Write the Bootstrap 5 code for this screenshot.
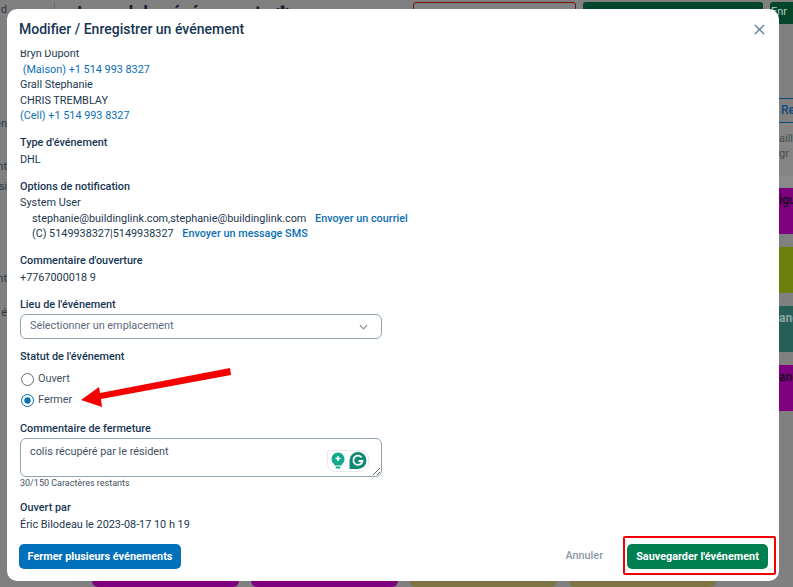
<!DOCTYPE html>
<html lang="fr">
<head>
    <meta charset="UTF-8">
    <meta name="viewport" content="width=device-width, initial-scale=1.0">
    <title>Modifier / Enregistrer un événement</title>
    <link href="https://cdn.jsdelivr.net/npm/bootstrap@5.3.0/dist/css/bootstrap.min.css" rel="stylesheet">
    <style>
        html, body { height: 100%; overflow: hidden; }
        body { background: #808080; font-family: Roboto, "Liberation Sans", sans-serif; font-size: 10.85px; color: #22384f; }

        /* page derriere la modale */
        .fond { height: 587px; width: 793px; overflow: hidden; position: relative; background: #808080; }
        .fond-haut { height: 30px; overflow: hidden; padding-top: 2px; }
        .fond-titre { flex: none; font-size: 18px; font-weight: 700; color: #0d1f33; line-height: 22px; margin-left: 72px; width: 322px; white-space: nowrap; }
        .fond-btn { height: 22px; border-radius: 3px; flex: none; }
        .fond-rouge { width: 163px; margin-left: 19px; border: 1px solid #7a1212; }
        .fond-vert { width: 180px; margin-left: 7px; background: #04452b; }
        .fond-vert2 { width: 30px; margin-left: 7px; background: #04452b; color: #b9cfc4; font-size: 11px; line-height: 20px; padding-left: 1px; }
        .fond-filet { position: absolute; left: 54px; top: 2px; width: 1px; height: 8px; background: #6a6a6a; }
        .fond-droite { position: absolute; left: 779px; top: 0; width: 14px; height: 587px; font-size: 12px; white-space: nowrap; overflow: hidden; }
        .fond-onglet { margin-top: 98px; height: 25px; border-top: 1px solid #0c4a78; border-bottom: 1px solid #0c4a78; color: #0c4a78; line-height: 23px; font-weight: 500; padding-left: 2px; }
        .fond-texte { height: 53px; background: #858585; color: #4b4b4b; line-height: 15px; padding-top: 8px; font-size: 11px; }
        .fond-carte { height: 46px; line-height: 24px; font-weight: 700; font-size: 12px; margin-bottom: 13px; color: #1d0a2a; }
        .fond-violet { background: #7f007f; }
        .fond-olive { background: #6c7f0b; }
        .fond-sarcelle { background: #265f55; color: #8fa6a1; }
        .fond-gauche { position: absolute; left: 0; top: 0; width: 7px; height: 587px; overflow: hidden; color: #2b3a49; font-size: 11px; line-height: 14px; }
        .fond-gauche div { display: flex; justify-content: flex-end; white-space: nowrap; }
        .fond-bas { position: absolute; left: 0; top: 581px; width: 793px; height: 6px; display: flex; overflow: hidden; }
        .fond-pastille { width: 147px; height: 6px; border-radius: 0 0 6px 6px; flex: none; }

        /* modale */
        .modale { position: absolute; left: 7px; top: 9px; width: 772px; height: 572px; border: 0; border-radius: 10px; overflow: hidden; background: #fff; }
        .modale .modal-header { height: 41px; padding: 0 14px 0 12px; border: 0; flex: none; }
        .modale .modal-title { font-size: 14px; font-weight: 500; color: #163553; margin: 0; }
        .btn-fermer { width: 11px; height: 11px; padding: 0; border: 0; background: none; display: block; line-height: 0; }
        .modale .modal-body { padding: 0 13px; overflow: hidden; height: 494px; flex: none; line-height: 15.5px; }
        .corps { margin-top: -4px; }
        .titre-champ { font-weight: 500; color: #163553; line-height: 16.5px; }
        .lien { color: #0b6fb5; text-decoration: none; }
        .lien-fort { color: #0b6fb5; text-decoration: none; font-weight: 500; margin-left: 6px; }
        .bloc { margin-bottom: 11.5px; }
        .bloc-lieu { margin-bottom: 9.5px; }
        .retrait { padding-left: 12px; }
        .champ { width: 362px; }
        .champ-select { margin-top: 1px; height: 25px; font-size: 10.85px; color: #5b6b7d; background-color: #fff; border: 1px solid #93a3b6; border-radius: 6px; padding: 0 9px; background-image: url("data:image/svg+xml,%3csvg xmlns='http://www.w3.org/2000/svg' viewBox='0 0 10 6'%3e%3cpath fill='none' stroke='%236f8093' stroke-width='1.200' d='M1 1l4 4 4-4'/%3e%3c/svg%3e"); background-size: 9px 6px; background-position: right 13px center; }
        .champ-texte { height: 39px; min-height: 39px; font-size: 10.85px; color: #3f5163; border: 1px solid #93a3b6; border-radius: 6px; padding: 5px 9px; line-height: 15px; }
        .zone-texte { position: relative; }
        .grammarly { position: absolute; left: 307px; top: 12px; width: 42px; height: 22px; background: #fff; border: 1px solid #e6eaee; border-radius: 0 9px 9px 9px; line-height: 0; }
        .radio-ligne { display: flex; align-items: center; gap: 4px; margin-bottom: 7px; min-height: 14px; padding: 0; color: #3f5163; line-height: 14px; }
        .radio-ligne .form-check-input { float: none; margin: 0 0 0 1px; width: 13px; height: 13px; border: 1px solid #5e6f80; flex: none; }
        .radio-ligne .form-check-input:checked { background-color: #fff; border-color: #0b6fb5; background-image: url("data:image/svg+xml,%3csvg xmlns='http://www.w3.org/2000/svg' viewBox='-4 -4 8 8'%3e%3ccircle r='2.300' fill='%230b6fb5'/%3e%3c/svg%3e"); }
        .compteur { font-size: 9px; color: #3f5163; line-height: 12px; }
        .espace-statut { margin-bottom: 7px; }
        .bloc-statut { margin-bottom: 14px; }
        .modale .modal-footer { flex: none; border: 0; padding: 0 11px 0 12px; height: 37px; align-items: flex-start; justify-content: space-between; margin: 0; }
        .modale .modal-footer > * { margin: 0; }
        .btn-bleu, .btn-vert { font-size: 10.85px; font-weight: 700; height: 25px; padding: 0; border: 0; border-radius: 5px; color: #fff; line-height: 25px; white-space: nowrap; }
        .btn-bleu { background: #0070bb; width: 162px; }
        .btn-vert { background: #008052; width: 141px; margin-left: 24px; }
        .btn-bleu:hover { background: #0070bb; color: #fff; }
        .btn-vert:hover { background: #008052; color: #fff; }
        .btn-annuler { font-size: 10.85px; font-weight: 500; color: #8d99a6; padding: 0; border: 0; background: none; }
        .annotation { position: absolute; left: 0; top: 0; pointer-events: none; }
        .cadre-rouge { position: absolute; left: 623px; top: 536px; width: 153px; height: 39px; border: 2px solid #f40000; border-radius: 2px; }
    </style>
</head>
<body>

<div class="fond">
    <div class="fond-haut d-flex align-items-start">
        <div class="fond-titre">Journal des événements ✱</div>
        <div class="fond-btn fond-rouge"></div>
        <div class="fond-btn fond-vert"></div>
        <div class="fond-btn fond-vert2">Enr</div>
    </div>
    <div class="fond-filet"></div>

    <div class="fond-gauche">
        <div style="margin-top:3px">d</div>
        <div style="margin-top:100px">en</div>
        <div style="margin-top:29px">nt</div>
        <div style="margin-top:6px">si</div>
        <div style="margin-top:78px">nt</div>
        <div style="margin-top:20px">é</div>
    </div>

    <div class="fond-droite">
        <div class="fond-onglet">Re</div>
        <div class="fond-texte">aille<br>gr</div>
        <div style="height:12px;background:#8a8a8a"></div>
        <div class="fond-carte fond-violet">igu</div>
        <div class="fond-carte fond-olive"></div>
        <div class="fond-carte fond-sarcelle">anc</div>
        <div class="fond-carte fond-violet">anc</div>
    </div>

    <div class="fond-bas">
        <div class="fond-pastille fond-violet" style="margin-left:92px"></div>
        <div class="fond-pastille fond-violet" style="margin-left:12px"></div>
        <div class="fond-pastille" style="margin-left:12px;background:#7f7443"></div>
        <div class="fond-pastille" style="margin-left:12px;background:#7f7443"></div>
    </div>
</div>

<div class="modal-content modale">
    <div class="modal-header">
        <h5 class="modal-title">Modifier / Enregistrer un événement</h5>
        <button type="button" class="btn-fermer ms-auto" aria-label="Fermer">
            <svg width="11" height="11" viewBox="0 0 11 11"><path d="M1 1l9 9M10 1l-9 9" stroke="#5f7c99" stroke-width="1.4" fill="none"/></svg>
        </button>
    </div>
    <div class="modal-body">
        <div class="corps">
            <div class="bloc">
                <div>Bryn Dupont</div>
                <div><a class="lien" href="#">&nbsp;(Maison) +1 514 993 8327</a></div>
                <div>Grall Stephanie</div>
                <div>CHRIS TREMBLAY</div>
                <div><a class="lien" href="#">(Cell) +1 514 993 8327</a></div>
            </div>
            <div class="bloc">
                <div class="titre-champ">Type d'événement</div>
                <div>DHL</div>
            </div>
            <div class="bloc">
                <div class="titre-champ">Options de notification</div>
                <div>System User</div>
                <div class="retrait">stephanie@buildinglink.com,stephanie@buildinglink.com <a class="lien-fort" href="#">Envoyer un courriel</a></div>
                <div class="retrait">(C) 5149938327|5149938327 <a class="lien-fort" href="#">Envoyer un message SMS</a></div>
            </div>
            <div class="bloc">
                <div class="titre-champ">Commentaire d'ouverture</div>
                <div>+7767000018 9</div>
            </div>
            <div class="bloc-lieu">
                <div class="titre-champ">Lieu de l'événement</div>
                <select class="form-select champ champ-select">
                    <option>Sélectionner un emplacement</option>
                </select>
            </div>
            <div class="bloc-statut">
                <div class="titre-champ espace-statut">Statut de l'événement</div>
                <div class="form-check radio-ligne">
                    <input class="form-check-input" type="radio" name="statut" id="ouvert">
                    <label for="ouvert">Ouvert</label>
                </div>
                <div class="form-check radio-ligne">
                    <input class="form-check-input" type="radio" name="statut" id="fermer" checked>
                    <label for="fermer">Fermer</label>
                </div>
            </div>
            <div class="bloc">
                <div class="titre-champ">Commentaire de fermeture</div>
                <div class="zone-texte champ">
                    <textarea class="form-control champ-texte">colis récupéré par le résident</textarea>
                    <div class="grammarly">
                        <svg width="40" height="20" viewBox="0 0 40 20">
                            <path d="M10 1.500a6.500 6.500 0 0 1 3.800 11.700V14.500h-7.600v-1.300A6.500 6.500 0 0 1 10 1.500z" fill="#12a88b"/>
                            <rect x="7.500" y="15.500" width="5" height="2" rx="1" fill="#12a88b"/>
                            <path d="M10 5v5M7.500 7.500h5" stroke="#fff" stroke-width="1.500"/>
                            <path d="M30 1a8.500 8.500 0 1 1 0 17h-8.500v-8.500A8.500 8.500 0 0 1 30 1z" fill="#0f8a70"/>
                            <path d="M33.500 6.300a4.600 4.600 0 1 0 1 3.700h-4" stroke="#fff" stroke-width="1.800" fill="none"/>
                        </svg>
                    </div>
                </div>
                <div class="compteur">30/150 Caractères restants</div>
            </div>
            <div>
                <div class="titre-champ">Ouvert par</div>
                <div>Éric Bilodeau le 2023-08-17 10 h 19</div>
            </div>
        </div>
    </div>
    <div class="modal-footer">
        <button type="button" class="btn btn-bleu">Fermer plusieurs événements</button>
        <div class="d-flex align-items-center">
            <button type="button" class="btn-annuler">Annuler</button>
            <button type="button" class="btn btn-vert">Sauvegarder l'événement</button>
        </div>
    </div>
</div>

<svg class="annotation" width="793" height="587" viewBox="0 0 793 587">
    <polygon points="81,400 99,387 100,393 230,368 231,375 101,399 102,407" fill="#f40000"/>
</svg>
<div class="cadre-rouge"></div>

<script src="https://cdn.jsdelivr.net/npm/bootstrap@5.3.0/dist/js/bootstrap.bundle.min.js"></script>
</body>
</html>
